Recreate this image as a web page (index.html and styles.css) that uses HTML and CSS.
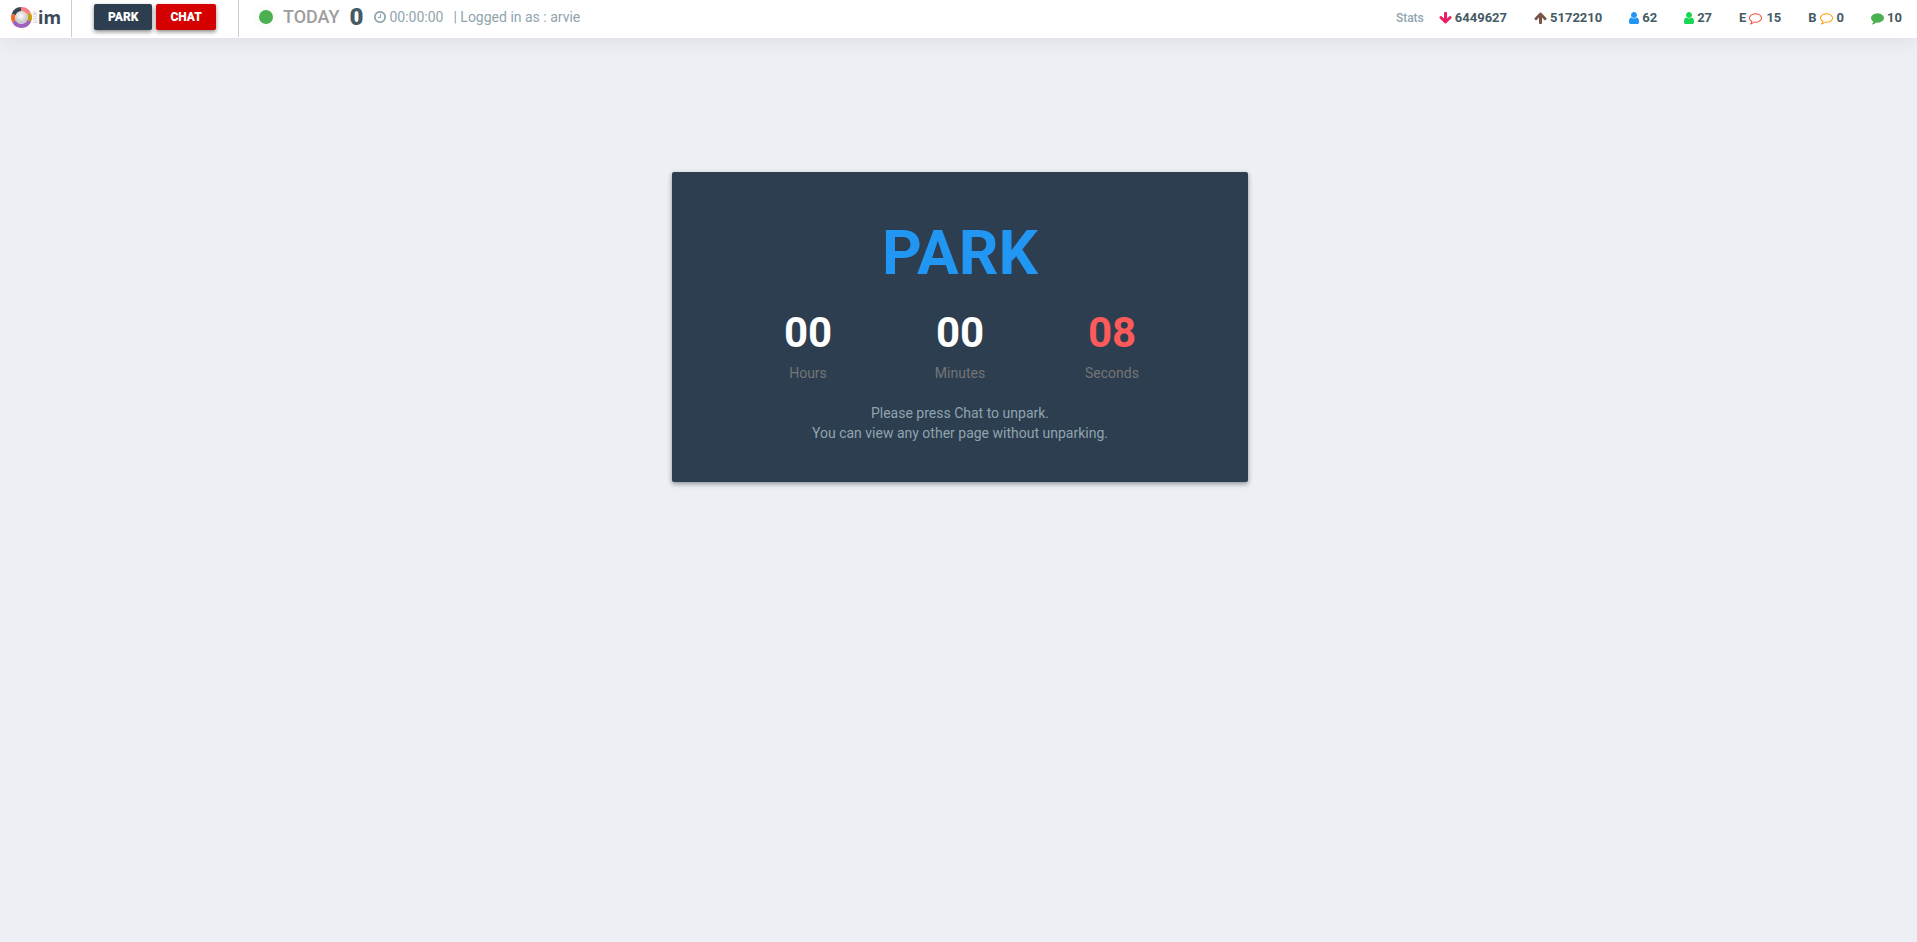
FILE: index.html
```html
<!DOCTYPE html>
<html lang="en">
<head>
<meta charset="utf-8">
<title>Park</title>
<link rel="stylesheet" href="styles.css">
</head>
<body>
<svg class="sprite" aria-hidden="true">
  <symbol id="down" viewBox="0 0 1664 1792"><path d="M1611 832q0 53-37 90l-651 652q-39 37-91 37-53 0-90-37L91 922q-38-36-38-90 0-53 38-91l74-75q39-37 91-37 53 0 90 37l294 294V256q0-52 38-90t90-38h128q52 0 90 38t38 90v704l294-294q37-37 90-37 52 0 91 37l75 75q37 39 37 91z"/></symbol>
  <symbol id="up" viewBox="0 0 1664 1792"><path d="M1611 971q0 51-37 90l-75 75q-38 38-91 38-54 0-90-38l-294-293v704q0 52-37.500 84.500T896 1664H768q-53 0-90.500-32.500T640 1547V843l-294 293q-36 38-90 38t-90-38l-75-75q-38-38-38-90 0-53 38-91l651-651q35-37 90-37 54 0 91 37l651 651q37 39 37 91z"/></symbol>
  <symbol id="user" viewBox="0 0 1280 1792"><path d="M1280 1399q0 109-62.500 187t-150.500 78H213q-88 0-150.500-78T0 1399q0-85 8.500-160.500t31.500-152 58.500-131 94-89T327 832q131 128 313 128t313-128q76 0 134.500 34.500t94 89 58.500 131 31.500 152 8.500 160.500zM1024 512q0 159-112.500 271.500T640 896 368.500 783.500 256 512t112.500-271.500T640 128t271.500 112.500T1024 512z"/></symbol>
  <symbol id="bubble-o" viewBox="0 0 1792 1792"><path d="M896 384q-204 0-381.500 69.500T232.500 641 128 896q0 112 71.500 213.500T401 1285l87 50-27 96q-24 91-70 172 152-63 275-171l43-38 57 6q69 8 130 8 204 0 381.500-69.500t282-187.500T1664 896t-104.500-255-282-187.500T896 384zm896 512q0 174-120 321.500t-326 233-450 85.500q-70 0-145-8-198 175-460 242-49 14-114 22h-5q-15 0-27-10.500T129 1754v-1q-3-4-.5-12t2-10 4.500-9.500l6-9 7-8.500 8-9q7-8 31-34.500t34.500-38 31-39.500 32.500-51 27-59 26-76q-157-89-247.500-220T0 896q0-174 120-321.500t326-233T896 256t450 85.500 326 233T1792 896z"/></symbol>
  <symbol id="bubble" viewBox="0 0 1792 1792"><path d="M1792 896q0 174-120 321.500t-326 233-450 85.500q-70 0-145-8-198 175-460 242-49 14-114 22-17 2-30.500-9T129 1754v-1q-3-4-.5-12t2-10 4.500-9.500l6-9 7-8.500 8-9q7-8 31-34.500t34.500-38 31-39.500 32.500-51 27-59 26-76q-157-89-247.500-220T0 896q0-130 71-248.500T262 443t286-136.500T896 256q244 0 450 85.500t326 233T1792 896z"/></symbol>
  <symbol id="clock" viewBox="0 0 1536 1792"><path d="M896 544v448q0 14-9 23t-23 9H544q-14 0-23-9t-9-23v-64q0-14 9-23t23-9h224V544q0-14 9-23t23-9h64q14 0 23 9t9 23zm416 352q0-148-73-273t-198-198-273-73-273 73-198 198-73 273 73 273 198 198 273 73 273-73 198-198 73-273zm224 0q0 209-103 385.500T1153.500 1561 768 1664t-385.500-103T103 1281.500 0 896t103-385.500T382.500 231 768 128t385.500 103T1433 510.500 1536 896z"/></symbol>
</svg>

<header class="topbar">
  <a class="brand" href="#" aria-label="Loop im">
    <svg class="brand-ring" viewBox="0 0 20 20" aria-hidden="true">
      <defs><radialGradient id="ball" cx="45%" cy="38%"><stop offset="0" stop-color="#fff"/><stop offset="1" stop-color="#c9c9cb"/></radialGradient></defs>
      <g fill="none" stroke-width="4">
        <path stroke="#f77e82" d="M9.500 2A8 8 0 0 1 17.200 6.600"/>
        <path stroke="#c3a112" d="M17.200 6.600A8 8 0 0 1 17.200 13.400"/>
        <path stroke="#a162bd" d="M17.400 13A8 8 0 0 1 2.800 13.400"/>
        <path stroke="#f26b2c" d="M2.800 13.400A8 8 0 0 1 2.600 7"/>
        <path stroke="#3a4654" d="M2.600 7A8 8 0 0 1 9.500 2"/>
      </g>
      <circle cx="10" cy="10" r="6" fill="url(#ball)"/>
    </svg>
    <span class="brand-side">LOOP</span>
    <span class="brand-name">im</span>
  </a>
  <div class="modes">
    <button class="btn btn-park" type="button">PARK</button>
    <button class="btn btn-chat" type="button">CHAT</button>
  </div>
  <div class="session">
    <span class="status-dot"></span>
    <span class="today">TODAY</span>
    <strong class="count">0</strong>
    <span class="timer"><svg class="icon clock" aria-hidden="true"><use href="#clock"/></svg>00:00:00</span>
    <span class="login">| Logged in as : arvie</span>
  </div>
  <div class="stats">
    <span class="stats-label">Stats</span>
    <ul class="stats-list">
      <li><svg class="icon arrow pink"><use href="#down"/></svg>6449627</li>
      <li><svg class="icon arrow brown"><use href="#up"/></svg>5172210</li>
      <li><svg class="icon user blue"><use href="#user"/></svg>62</li>
      <li><svg class="icon user green"><use href="#user"/></svg>27</li>
      <li>E<svg class="icon bubble outline red"><use href="#bubble-o"/></svg>15</li>
      <li>B<svg class="icon bubble outline orange"><use href="#bubble-o"/></svg>0</li>
      <li><svg class="icon bubble leaf"><use href="#bubble"/></svg>10</li>
    </ul>
  </div>
</header>

<main class="page">
  <section class="card">
    <h1 class="card-title">PARK</h1>
    <div class="clock-row">
      <div class="unit"><span class="digits">00</span><span class="unit-name">Hours</span></div>
      <div class="unit"><span class="digits">00</span><span class="unit-name">Minutes</span></div>
      <div class="unit"><span class="digits alert">08</span><span class="unit-name">Seconds</span></div>
    </div>
    <p class="hint">Please press Chat to unpark.<br>You can view any other page without unparking.</p>
  </section>
</main>
</body>
</html>
```
FILE: styles.css
```css
* {
  box-sizing: border-box;
}

body {
  margin: 0;
  min-height: 100vh;
  background: #ecf0f5;
  color: #455a64;
  font: 14px/20px Roboto, sans-serif;
}

.sprite {
  display: none;
}

.topbar {
  display: flex;
  height: 38px;
  padding-bottom: 1px;
  background: #fff;
  box-shadow: 0 2px 20px rgba(0, 0, 0, 0.08);
}

.brand {
  display: flex;
  align-items: center;
  width: 72px;
  padding: 0 0 2px 11px;
  border-right: 1px solid #ccc;
  color: #3d4a5a;
  text-decoration: none;
}

.brand-ring {
  width: 21px;
  height: 21px;
}

.brand-side {
  width: 6px;
  color: #bbb;
  font-size: 5px;
  line-height: 6px;
  writing-mode: vertical-rl;
  transform: rotate(180deg);
}

.brand-name {
  padding-bottom: 2px;
  font: 700 18px/20px "Noto Sans", sans-serif;
}

.modes {
  display: flex;
  gap: 4px;
  align-items: flex-start;
  padding: 4px 22px;
  border-right: 1px solid #ccc;
}

.btn {
  height: 26px;
  padding: 0 14px;
  border: 0;
  border-radius: 2px;
  box-shadow: 0 2px 4px rgba(0, 0, 0, 0.45);
  color: #fff;
  font: 900 12px/26px Roboto, sans-serif;
}

.btn-park {
  background: #2c3e50;
}

.btn-chat {
  background: #d50000;
}

.session {
  display: flex;
  align-items: center;
  padding: 0 0 3px 20px;
  color: #90a4ae;
}

.status-dot {
  width: 14px;
  height: 14px;
  border-radius: 50%;
  background: #4caf50;
  box-shadow: 0 0 0 5px #fafdfa;
}

.today {
  margin-left: 10px;
  color: #9e9e9e;
  font-size: 18px;
  font-weight: 500;
}

.count {
  margin-left: 10px;
  color: #455a64;
  font-size: 24px;
  font-weight: 900;
}

.timer {
  display: flex;
  gap: 3px;
  align-items: center;
  margin-left: 11px;
}

.login {
  margin-left: 10px;
}

.icon {
  display: block;
  height: 14px;
  fill: currentColor;
}

.clock {
  width: 12px;
}

.stats {
  display: flex;
  gap: 15px;
  align-items: center;
  margin-left: auto;
  padding: 0 15px 2px 0;
}

.stats-label {
  color: #90a4ae;
  font-size: 12px;
  font-weight: 500;
}

.stats-list {
  display: flex;
  gap: 27px;
  margin: 0;
  padding: 0;
  list-style: none;
  font-size: 13px;
  font-weight: 700;
}

.stats-list li {
  display: flex;
  gap: 3px;
  align-items: center;
}

.arrow {
  width: 13px;
}

.user {
  width: 10px;
}

.bubble {
  width: 13px;
}

.outline {
  margin-right: 1px;
}

.pink { color: #e91e63; }
.brown { color: #795548; }
.blue { color: #2196f3; }
.green { color: #18d654; }
.red { color: #f44336; }
.orange { color: #ff9800; }
.leaf { color: #4caf50; }

.page {
  display: flex;
  justify-content: center;
  padding: 134px 0 40px 3px;
}

.card {
  width: 576px;
  padding: 49px 60px 39px;
  border-radius: 2px;
  background: #2c3e50;
  box-shadow: 0 2px 5px rgba(0, 0, 0, 0.4);
  text-align: center;
}

.card-title {
  margin: 0;
  color: #2196f3;
  font-size: 62px;
  font-weight: 700;
  line-height: 64px;
}

.clock-row {
  display: grid;
  grid-template-columns: repeat(3, 1fr);
  margin-top: 24px;
}

.unit {
  display: flex;
  flex-direction: column;
  gap: 6px;
}

.digits {
  color: #fff;
  font-size: 42px;
  font-weight: 700;
  line-height: 48px;
}

.alert {
  color: #ff5a5a;
}

.unit-name {
  color: #757575;
}

.hint {
  margin: 20px 0 0;
  color: #90a4ae;
}
```
